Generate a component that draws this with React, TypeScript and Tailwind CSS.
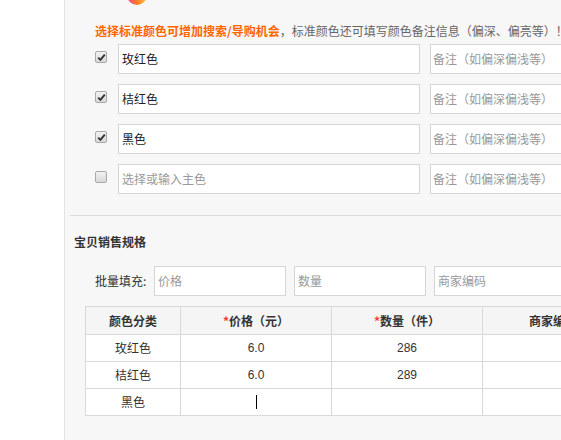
import React from "react";

const font = "font-['Noto_Sans_CJK_SC','Liberation_Sans',sans-serif]";

function Check({ checked }: { checked: boolean }) {
  return (
    <div className="mt-[7px] w-[12px] h-[12px] shrink-0 rounded-[2px] border border-[#a9a9a9] bg-gradient-to-b from-[#f2f2f2] to-[#d8d8d8] flex items-center justify-center">
      {checked && (
        <svg width="9" height="9" viewBox="0 0 9 9">
          <path d="M1.2 4.6 L3.4 6.9 L7.8 1.6" stroke="#333" strokeWidth="1.9" fill="none" />
        </svg>
      )}
    </div>
  );
}

function ColorRow({ value, checked }: { value?: string; checked: boolean }) {
  return (
    <div className="flex items-start pl-[30px] gap-[11px]">
      <Check checked={checked} />
      <div className="flex gap-[10px]">
        <div className="w-[302px] h-[30px] bg-white border border-[#d6d6d6] flex items-center pl-[3px] text-[12px]">
          {value ? (
            <span className="text-[#222]">{value}</span>
          ) : (
            <span className="text-[#999]">选择或输入主色</span>
          )}
        </div>
        <div className="w-[160px] h-[30px] bg-white border border-[#d6d6d6] flex items-center pl-[2px] text-[12px] text-[#999] whitespace-nowrap">
          备注（如偏深偏浅等）
        </div>
      </div>
    </div>
  );
}

const cell = "border-r border-b border-[#d9d9d9] flex items-center justify-center";

export default function App() {
  const rows = [
    { name: "玫红色", price: "6.0", qty: "286" },
    { name: "桔红色", price: "6.0", qty: "289" },
    { name: "黑色", price: "", qty: "" },
  ];
  return (
    <div className={`w-[561px] h-[440px] overflow-hidden flex ${font} text-[12px]`}>
      <div className="w-[64px] shrink-0 bg-white" />
      <div className="w-[497px] shrink-0 bg-[#f7f7f7] border-l border-[#e3e3e3] flex flex-col overflow-hidden">
        <div className="h-[5px] overflow-hidden shrink-0">
          <div className="ml-[62px] -mt-[15px] w-[20px] h-[20px] rounded-full bg-gradient-to-r from-[#f0407a] via-[#ff7a22] to-[#ffc444]" />
        </div>
        <div className="mt-[16px] pl-[30px] h-[20px] leading-[20px] whitespace-nowrap">
          <span className="text-[#ff6600] font-bold">选择标准颜色可增加搜索/导购机会</span>
          <span className="text-[#666]">，标准颜色还可填写颜色备注信息（偏深、偏亮等）！</span>
        </div>
        <div className="mt-[3px] flex flex-col gap-[10px]">
          <ColorRow value="玫红色" checked />
          <ColorRow value="桔红色" checked />
          <ColorRow value="黑色" checked />
          <ColorRow checked={false} />
        </div>
        <div className="mt-[21px] ml-[5px] border-t border-[#dcdcdc]" />
        <div className="mt-[16px] ml-[9px] h-[20px] leading-[20px] font-bold text-[#333]">宝贝销售规格</div>
        <div className="mt-[14px] flex items-center pl-[30px]">
          <span className="w-[59px] shrink-0 whitespace-nowrap text-[#333]">批量填充:</span>
          <div className="flex gap-[8px] shrink-0">
            <div className="w-[132px] h-[30px] bg-white border border-[#d6d6d6] flex items-center pl-[3px] text-[#999]">价格</div>
            <div className="w-[132px] h-[30px] bg-white border border-[#d6d6d6] flex items-center pl-[3px] text-[#999]">数量</div>
            <div className="w-[140px] h-[30px] bg-white border border-[#d6d6d6] flex items-center pl-[3px] text-[#999]">商家编码</div>
          </div>
        </div>
        <div className="mt-[10px] ml-[20px] w-[560px] shrink-0 border-t border-l border-[#d9d9d9] grid grid-cols-[95px_151px_151px_160px] grid-rows-[28px_27px_27px_27px]">
          <div className={`${cell} bg-[#f5f5f5] font-bold text-[#333]`}>颜色分类</div>
          <div className={`${cell} bg-[#f5f5f5] font-bold text-[#333]`}>
            <span className="text-[#f33]">*</span>价格（元）
          </div>
          <div className={`${cell} bg-[#f5f5f5] font-bold text-[#333]`}>
            <span className="text-[#f33]">*</span>数量（件）
          </div>
          <div className={`${cell} bg-[#f5f5f5] font-bold text-[#333] justify-start pl-[46px] whitespace-nowrap`}>商家编码</div>
          {rows.map((r) => (
            <React.Fragment key={r.name}>
              <div className={`${cell} bg-white text-[#333]`}>{r.name}</div>
              <div className={`${cell} bg-white text-[#333] font-['Liberation_Sans',sans-serif]`}>
                {r.price || <span className="inline-block w-[1px] h-[14px] bg-black" />}
              </div>
              <div className={`${cell} bg-white text-[#333] font-['Liberation_Sans',sans-serif]`}>{r.qty}</div>
              <div className={`${cell} bg-white`} />
            </React.Fragment>
          ))}
        </div>
      </div>
    </div>
  );
}
